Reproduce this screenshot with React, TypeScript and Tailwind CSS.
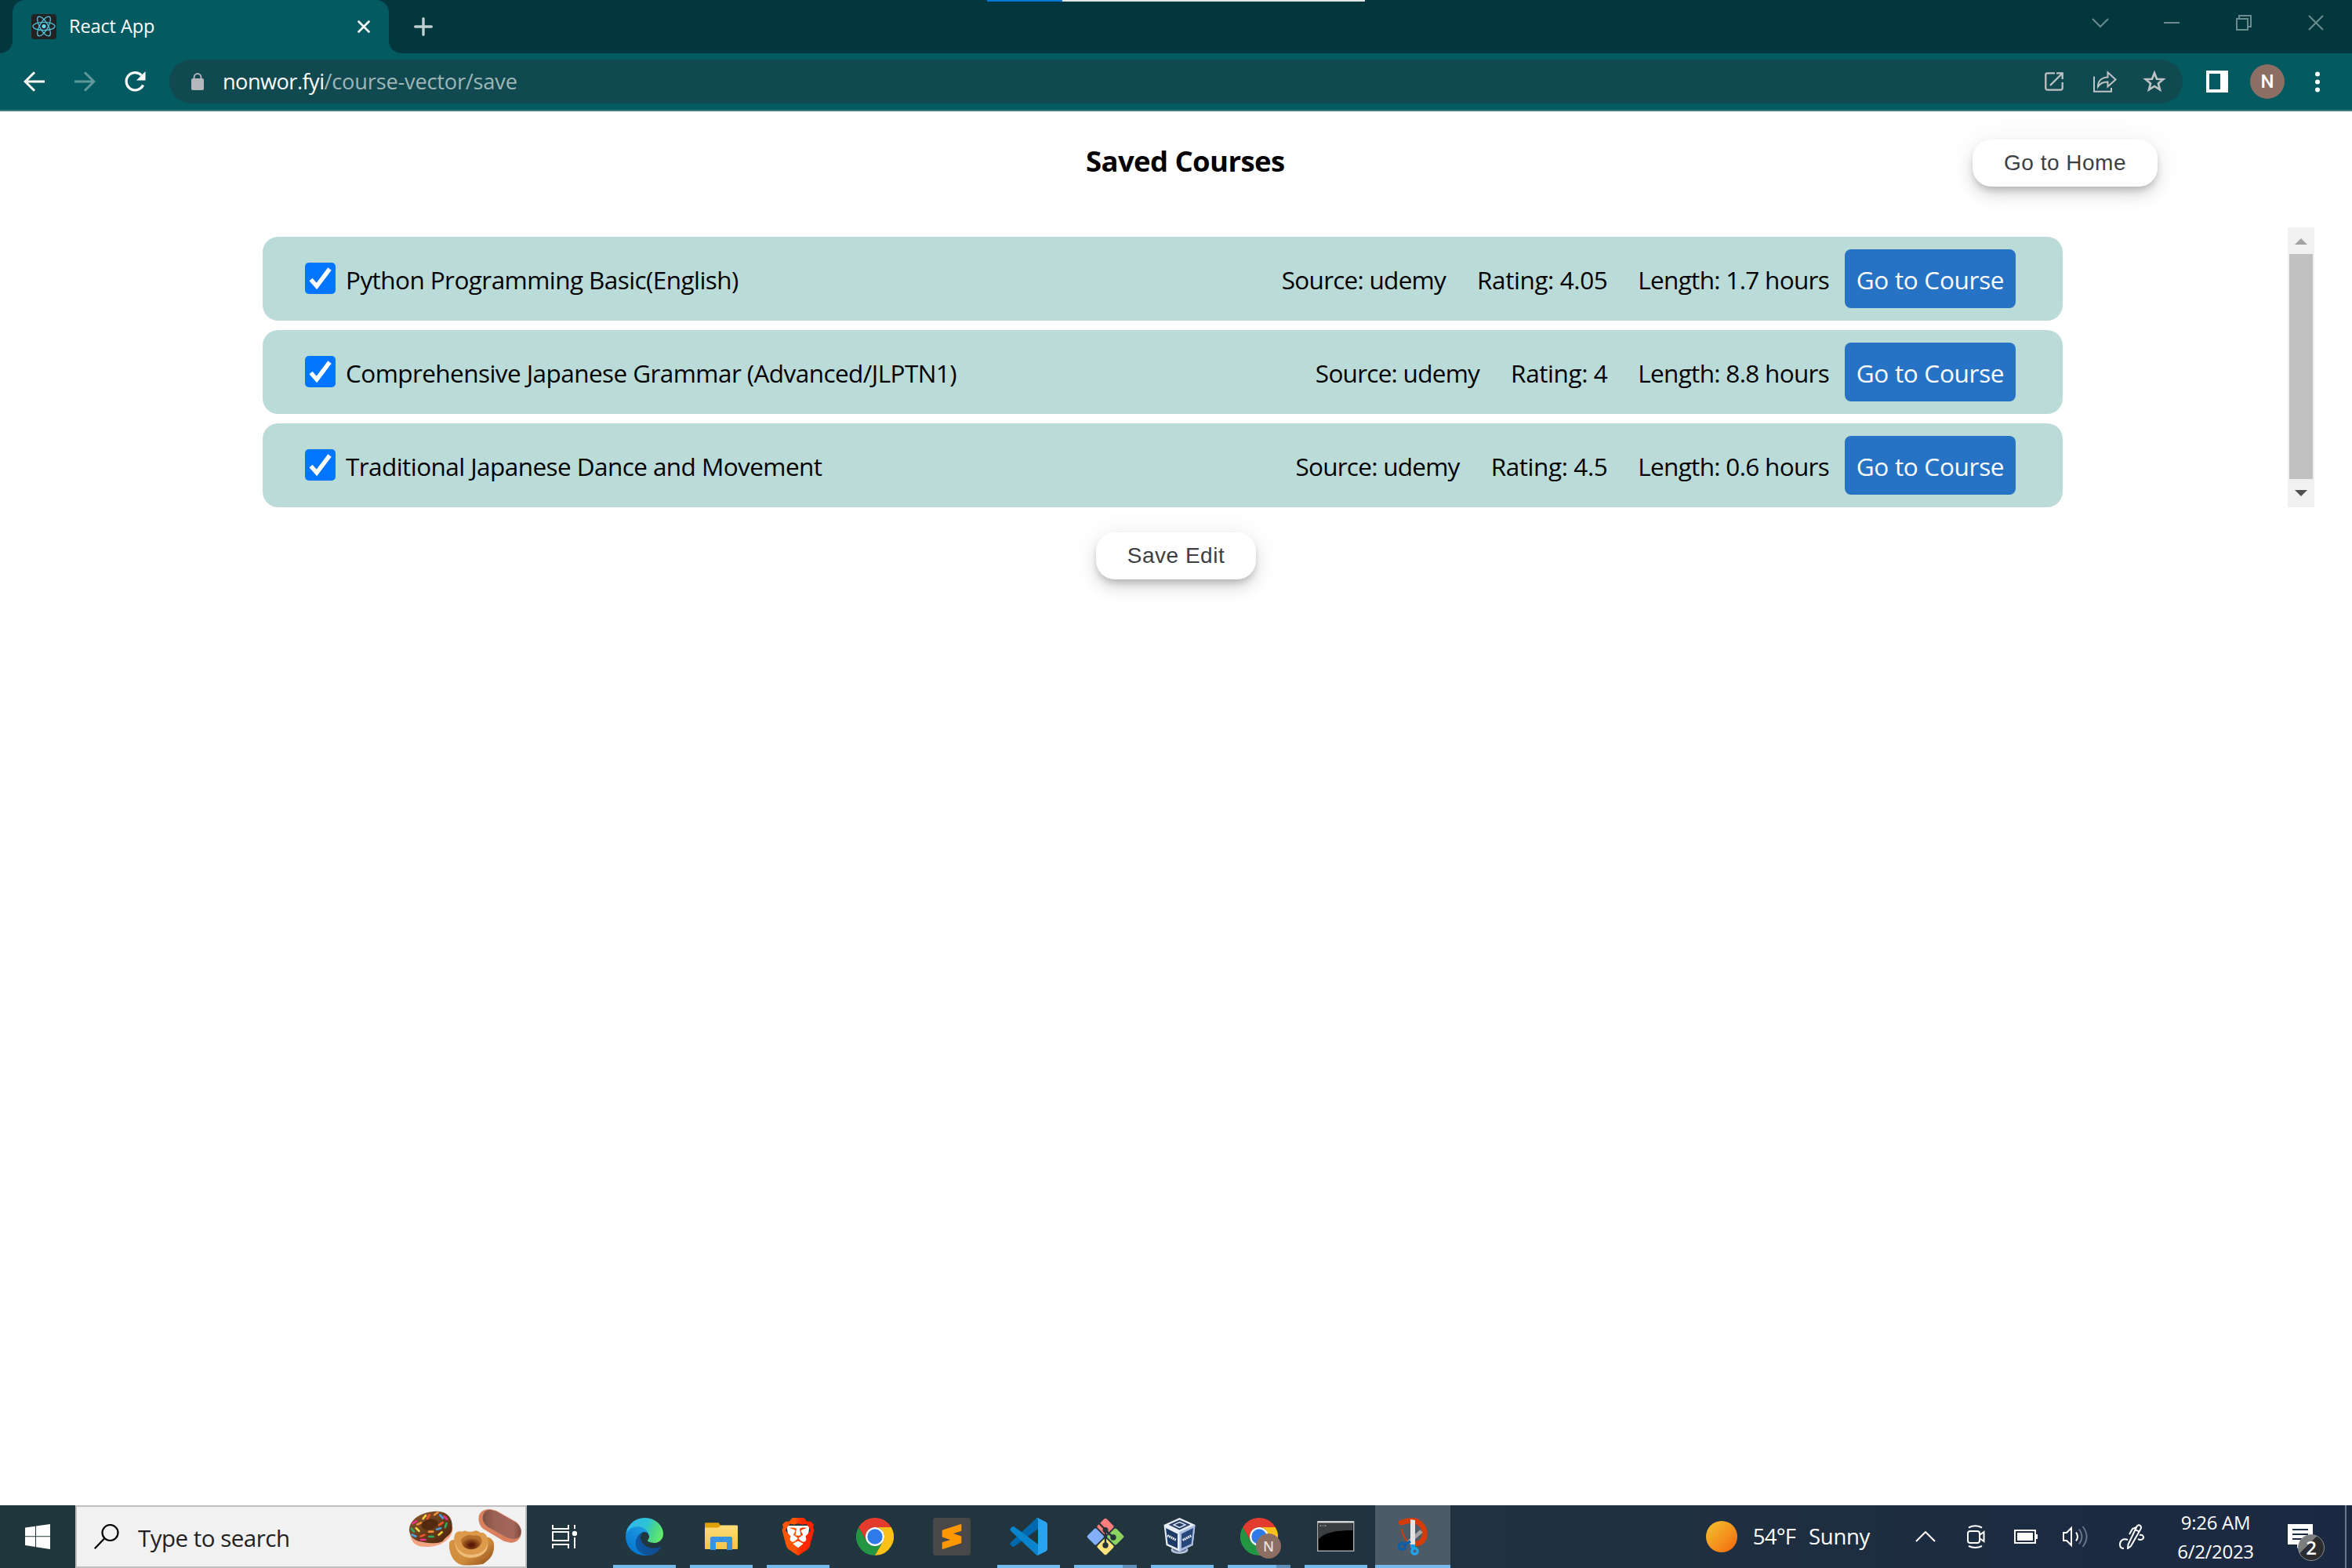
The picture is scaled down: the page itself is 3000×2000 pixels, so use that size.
import { type ReactNode } from 'react';
import { SiBrave, SiSublimetext } from 'react-icons/si';

const ui = "font-['Open_Sans','Noto_Sans',sans-serif] whitespace-nowrap leading-none";

function ReactFavicon() {
  return (
    <svg className="h-8 w-8 shrink-0" viewBox="0 0 32 32" fill="none" stroke="#53c1de" strokeWidth="1.3">
      <rect width="32" height="32" rx="4" fill="#222" stroke="none" />
      <ellipse cx="16" cy="15.5" rx="14" ry="5.2" />
      <ellipse cx="16" cy="15.5" rx="14" ry="5.2" transform="rotate(60 16 15.5)" />
      <ellipse cx="16" cy="15.5" rx="14" ry="5.2" transform="rotate(120 16 15.5)" />
      <circle cx="16" cy="15.5" r="2.5" fill="#61dafb" stroke="none" />
    </svg>
  );
}

function TabStrip() {
  return (
    <div className="relative flex h-[68px] items-start bg-[#02383d]">
      <div className="flex h-[68px] w-4 items-end bg-[#035b61]">
        <div className="h-full w-4 rounded-br-2xl bg-[#02383d]" />
      </div>
      <div className="flex h-[68px] w-[480px] items-center rounded-t-2xl bg-[#035b61] pl-6 pr-6">
        <ReactFavicon />
        <span className={`${ui} ml-4 grow text-[23.5px] tracking-[-0.1px] text-white`}>React App</span>
        <svg className="h-4 w-4" viewBox="0 0 16 16" stroke="#fff" strokeWidth="2.6" strokeLinecap="round">
          <path d="M1.5 1.5l13 13M14.5 1.5l-13 13" />
        </svg>
      </div>
      <div className="flex h-[68px] w-8 bg-[#035b61]">
        <div className="h-full w-8 rounded-bl-2xl bg-[#02383d]" />
      </div>
      <svg className="mt-[22px] h-6 w-6" viewBox="0 0 24 24" stroke="#c0cfd0" strokeWidth="3.4" strokeLinecap="round">
        <path d="M12 1.7v20.6M1.7 12h20.6" />
      </svg>
      <div className="ml-[707px] flex h-0.5 w-[482px]">
        <div className="w-24 bg-[#0078d4]" />
        <div className="grow bg-[#e3e6e6]" />
      </div>
      <svg className="absolute right-9 top-[19px] h-5 w-[296px]" viewBox="0 0 296 20" fill="none" stroke="#6b8b8e" strokeWidth="2">
        <path d="M1 5l10 10L21 5" />
        <path d="M92 10h20" />
        <path d="M185 5h14v14h-14zM188 5V1h15v14h-4" />
        <path d="M277 1l18 18M295 1l-18 18" />
      </svg>
    </div>
  );
}

function Toolbar() {
  return (
    <div className="flex h-[74px] items-center border-b-2 border-[#3c7d81] bg-[#035b61]">
      <svg className="ml-[30px] h-7 w-7" viewBox="0 0 28 28" fill="none" stroke="#fff" strokeWidth="3">
        <path d="M27 14H3M14 2.2L2.2 14 14 25.8" />
      </svg>
      <svg className="ml-9 h-7 w-7" viewBox="0 0 28 28" fill="none" stroke="#5f979b" strokeWidth="3">
        <path d="M1 14h24M14 2.2L25.8 14 14 25.8" />
      </svg>
      <svg className="ml-9 h-7 w-7" viewBox="0 0 28 28" fill="none" stroke="#fff" strokeWidth="3.2">
        <path d="M24.5 18.5A11.2 11.2 0 1 1 22.4 6" />
        <path d="M27.5 1v11.5H16z" fill="#fff" stroke="none" />
      </svg>
      <div className="ml-[30px] flex h-14 w-[2568px] items-center rounded-full bg-[#10494f] pl-7 pr-5">
        <svg className="h-[22px] w-4" viewBox="0 0 16 22">
          <path d="M3.6 8V5.5a4.4 4.4 0 0 1 8.8 0V8" fill="none" stroke="#b4b8bc" strokeWidth="2" />
          <rect y="7" width="16" height="15" rx="2" fill="#b4b8bc" />
        </svg>
        <div className={`${ui} ml-6 grow text-[27.2px] text-[#9fb6b9]`}>
          <span className="tracking-[-0.55px] text-white">nonwor.fyi</span>
          <span className="tracking-[-0.2px]">/course-vector/save</span>
        </div>
        <svg className="h-8 w-8" viewBox="0 0 32 32" fill="none" stroke="#bfc3c4" strokeWidth="2.3">
          <path d="M17 5.3H7.5A2.2 2.2 0 0 0 5.3 7.5v17a2.2 2.2 0 0 0 2.2 2.2h17a2.2 2.2 0 0 0 2.2-2.2V17M19 5.3h7.7V13M26.7 5.3L11 21" />
        </svg>
        <svg className="ml-8 h-8 w-8" viewBox="0 0 32 32" fill="none" stroke="#bfc3c4" strokeWidth="2">
          <path d="M3 9.500v19.300h22V24M8 22.500c0-8 5.500-11.800 12.500-12V4.300l10 9.200-10 9v-6c-6-.2-9.500 1.500-12.500 6z" />
        </svg>
        <svg className="ml-8 h-8 w-8" viewBox="0 0 32 32" fill="none" stroke="#bfc3c4" strokeWidth="2.6">
          <path d="M16 5l3 7.700 8.300.5-6.400 5.200 2.100 8-7-4.400-7 4.400 2.100-8-6.400-5.200 8.300-.5z" />
        </svg>
      </div>
      <svg className="ml-[30px] h-7 w-7" viewBox="0 0 28 28">
        <path fillRule="evenodd" d="M0 0h28v28H0zM4 4v20h14V4z" fill="#fff" />
      </svg>
      <div className="ml-7 flex h-11 w-11 items-center justify-center rounded-full bg-[#8d6e63] font-[Roboto,sans-serif] text-[24px] leading-none font-medium text-white">
        N
      </div>
      <svg className="ml-[39px] h-[27px] w-1.5" viewBox="0 0 6 27" fill="#fff">
        <circle cx="3" cy="3.5" r="3" />
        <circle cx="3" cy="13.5" r="3" />
        <circle cx="3" cy="23.5" r="3" />
      </svg>
    </div>
  );
}

const pill =
  "font-['Liberation_Sans',Arial,sans-serif] flex h-[60px] items-center justify-center rounded-3xl bg-white text-[28px] leading-none tracking-[0.5px] text-[#3c4043] whitespace-nowrap shadow-[0_6px_10px_-2px_rgba(0,0,0,0.2),0_12px_20px_0_rgba(0,0,0,0.1),0_2px_36px_0_rgba(0,0,0,0.07)]";

const courses = [
  { title: 'Python Programming Basic(English)', rating: '4.05', length: '1.7' },
  { title: 'Comprehensive Japanese Grammar (Advanced/JLPTN1)', rating: '4', length: '8.8' },
  { title: 'Traditional Japanese Dance and Movement', rating: '4.5', length: '0.6' },
];

function CourseRow({ course }: { course: (typeof courses)[number] }) {
  return (
    <li className={`${ui} flex h-[107px] w-[2296px] items-center rounded-[20px] bg-[#bbdbd9] pl-[54px] pr-[60px] text-[31.5px] text-black`}>
      <svg className="mb-0.5 h-10 w-[39px] shrink-0" viewBox="0 0 39 40">
        <rect width="39" height="40" rx="5" fill="#0075ff" />
        <path d="M7.5 21.5l7.5 8.500L31.500 8" fill="none" stroke="#fff" strokeWidth="5.5" />
      </svg>
      <span className="ml-[13px] grow pt-0.5 tracking-[-0.57px]">{course.title}</span>
      <span className="mr-10 pt-0.5 tracking-[-0.74px]">Source: udemy</span>
      <span className="mr-[39px] pt-0.5 tracking-[-0.42px]">Rating: {course.rating}</span>
      <span className="mr-5 pt-0.5 tracking-[-0.7px]">Length: {course.length} hours</span>
      <a className="flex h-[75px] w-[218px] items-center justify-center rounded-lg bg-[#2673c5] pt-0.5 text-white">
        <span className="tracking-[-0.3px]">Go to Course</span>
      </a>
    </li>
  );
}

function Page() {
  return (
    <main className="flex grow flex-col bg-white">
      <header className="flex h-[148px] items-start pl-[1385px] pr-[248px] pt-9">
        <h1 className={`${ui} grow pt-[9px] text-[36.5px] font-bold tracking-[-0.6px] text-black`}>Saved Courses</h1>
        <button className={`${pill} w-[236px]`}>Go to Home</button>
      </header>
      <div className="flex h-[357px] justify-between pl-[335px] pr-12">
        <ul className="flex flex-col gap-3 pt-3">
          {courses.map((course) => <CourseRow key={course.title} course={course} />)}
        </ul>
        <div className="flex h-[357px] w-[34px] flex-col items-center justify-between bg-[#f1f1f1] py-3.5">
          <svg className="h-2 w-4" viewBox="0 0 16 8"><path d="M8 0l8 8H0z" fill="#a3a3a3" /></svg>
          <div className="mb-[14px] mt-3 w-[30px] grow bg-[#c1c1c1]" />
          <svg className="h-2 w-4" viewBox="0 0 16 8"><path d="M8 8L0 0h16z" fill="#505050" /></svg>
        </div>
      </div>
      <button className={`${pill} ml-[1398px] mt-8 w-[204px]`}>Save Edit</button>
    </main>
  );
}

const sprinkles: [number, number, number, string][] = [
  [92, 60, -50, '#f5d23c'], [107, 59, -60, '#f0542d'], [137, 47, -35, '#f08a3c'], [157, 58, 50, '#48a0e0'],
  [173, 63, 45, '#f02f8c'], [54, 80, -30, '#f02f8c'], [72, 85, -25, '#f08a3c'], [47, 110, 50, '#2fa866'],
  [66, 108, 45, '#f5e04c'], [52, 131, 25, '#48a0e0'], [85, 131, -20, '#f0542d'], [117, 116, 0, '#f08a3c'],
  [147, 105, -15, '#48a0e0'], [155, 86, -35, '#f0542d'], [174, 92, -70, '#2fa866'], [153, 123, -40, '#f5d23c'],
  [118, 135, 0, '#2fa866'], [87, 147, 0, '#f02f8c'],
];

function Donuts() {
  return (
    <svg className="h-[76px] w-[152px]" viewBox="22 21 456 228">
      <defs>
        <linearGradient id="glaze" x1="0" y1="0" x2="1" y2="1"><stop stopColor="#8a5a2c" /><stop offset="1" stopColor="#4a220c" /></linearGradient>
        <linearGradient id="dough" x1="0" y1="0" x2="1" y2="1"><stop stopColor="#d9974a" /><stop offset=".6" stopColor="#cf8a3a" /><stop offset="1" stopColor="#8a4a1a" /></linearGradient>
        <linearGradient id="eclair" x1="0" y1="0" x2="1" y2="0"><stop stopColor="#7d5040" /><stop offset=".3" stopColor="#9c6256" /><stop offset=".8" stopColor="#a3665a" /><stop offset="1" stopColor="#7d4a3e" /></linearGradient>
        <radialGradient id="hole" cy=".7"><stop offset=".2" stopColor="#5a1a06" /><stop offset="1" stopColor="#b5702c" /></radialGradient>
      </defs>
      <path d="M36 108C36 160 60 174 100 174c60 0 104-36 100-76z" fill="#f2a382" />
      <path d="M34 112C32 68 84 38 140 38c40 0 62 26 58 66-2 24-22 28-34 46-10 12-50 12-76 6-20-2-50-10-54-44z" fill="url(#glaze)" />
      <ellipse cx="112" cy="88" rx="33" ry="20" transform="rotate(-16 112 88)" fill="#522a10" />
      {sprinkles.map(([x, y, a, c]) => (
        <rect key={`${x}-${y}`} x={x - 12} y={y - 4} width="24" height="8" rx="4" fill={c} transform={`rotate(${a} ${x} ${y})`} />
      ))}
      <path d="M300 62c0-20 20-34 44-32l24 6 74 42c16 12 22 30 20 46-2 20-18 36-42 34l-24-6-78-46c-14-12-20-28-18-44z" fill="#d9805f" />
      <path d="M315 64c0-20 12-32 30-32l22 6 70 40c20 12 28 28 24 46-4 16-18 22-34 20l-20-6-72-40c-14-10-20-22-20-34z" fill="url(#eclair)" />
      <path d="M187 160c0-8 8-14 19-12 0-14 2-28 14-32 14 0 20 0 28-4 12 6 24 6 40 0 10 2 16 6 20 10 10 2 14 8 12 16 22-6 38 12 38 26 4 50-30 66-42 76-20 2-60 8-84 2-30-8-48-46-45-82z" fill="url(#dough)" />
      <path d="M208 150c-4-14 4-32 14-34l94 4c14 6 20 20 20 38-2 36-32 56-66 56-36 0-58-26-62-64z" fill="#dc9a4a" />
      <path d="M208 150c6 36 30 54 62 54 32 0 62-14 64-50 6 40-26 62-64 62-36 0-62-26-62-66z" fill="#eebd78" />
      <path d="M232 150c4-14 18-18 30-22 24 6 50-6 50 26-4 18-22 30-40 30-22 0-38-12-40-34z" fill="url(#hole)" />
    </svg>
  );
}

function Chrome() {
  return (
    <svg className="h-12 w-12" viewBox="0 0 48 48">
      <path d="M3.2 12A24 24 0 0 0 24 48l10.4-18a12 12 0 0 1-20.8 0z" fill="#239644" />
      <path d="M44.8 12H24a12 12 0 0 1 10.4 18L24 48a24 24 0 0 0 20.8-36z" fill="#fbc116" />
      <path d="M24 12h20.8A24 24 0 0 0 3.2 12l10.400 18A12 12 0 0 1 24 12z" fill="#e33b2e" />
      <circle cx="24" cy="24" r="12" fill="#fff" />
      <circle cx="24" cy="24" r="9.7" fill="#2f7bea" />
    </svg>
  );
}

function Edge() {
  return (
    <svg className="h-12 w-12" viewBox="0 0 256 256">
      <defs>
        <linearGradient id="e1" x1="0" x2="1" y1=".5" y2=".5"><stop stopColor="#0c59a4" /><stop offset="1" stopColor="#114a8b" /></linearGradient>
        <linearGradient id="e2" x1=".6" x2=".2" y1="0" y2="1"><stop stopColor="#1b9de2" /><stop offset=".4" stopColor="#1389d8" /><stop offset="1" stopColor="#0573cf" /></linearGradient>
        <linearGradient id="e3" x1="0" x2="1" y1=".3" y2=".6"><stop stopColor="#35b6f2" /><stop offset=".5" stopColor="#2cc3d4" /><stop offset=".75" stopColor="#4bd689" /><stop offset="1" stopColor="#66eb6e" /></linearGradient>
      </defs>
      <path fill="url(#e1)" d="M235.700 195.500a93.700 93.700 0 0 1-10.600 4.700 101.900 101.900 0 0 1-35.900 6.400c-47.300 0-88.500-32.500-88.500-74.300a31.500 31.500 0 0 1 16.400-27.300c-42.800 1.800-53.800 46.400-53.800 72.500 0 74 68.100 81.400 82.800 81.400 7.900 0 19.800-2.300 27-4.600l1.300-.4a128.300 128.300 0 0 0 66.600-52.800 4 4 0 0 0-5.300-5.600Z" />
      <path fill="url(#e2)" d="M105.700 241.400a79.200 79.200 0 0 1-22.700-21.300 80.700 80.700 0 0 1 29.500-120c3.200-1.500 8.500-4.100 15.600-4a32.400 32.400 0 0 1 25.700 13 31.900 31.900 0 0 1 6.300 18.700c0-.2 24.500-79.600-80-79.600-43.900 0-80 41.600-80 78.200a130.200 130.200 0 0 0 12.100 56 128 128 0 0 0 156.400 67 75.500 75.500 0 0 1-62.800-8Z" />
      <path fill="url(#e3)" d="M152.300 148.900c-.9 1-3.400 2.500-3.400 5.600 0 2.600 1.700 5.200 4.800 7.300 14.300 10 41.400 8.600 41.500 8.600a59.600 59.600 0 0 0 30.300-8.300 61.400 61.400 0 0 0 30.400-52.900c.3-22.400-8-37.300-11.300-43.900C223.500 23.900 177.700 0 128 0A128 128 0 0 0 0 126.200c.5-36.500 36.800-66 80-66 3.500 0 23.500.3 42 10a72.600 72.600 0 0 1 30.900 29.300c6.100 10.600 7.200 24.100 7.200 29.500s-2.700 13.300-7.800 19.900Z" />
    </svg>
  );
}

function Explorer() {
  return (
    <svg className="h-12 w-12" viewBox="0 0 48 48">
      <defs>
        <linearGradient id="f1" x1="0" y1="0" x2="0" y2="1"><stop stopColor="#ffdd78" /><stop offset="1" stopColor="#f6c445" /></linearGradient>
      </defs>
      <path d="M3 14V7.500A1.200 1.200 0 0 1 4.200 6.300h16.300l2.500 3.200v4z" fill="#dfa008" />
      <path d="M3 12.500h17l3.500-3H44a1 1 0 0 1 1 1V39a1 1 0 0 1-1 1H4a1 1 0 0 1-1-1z" fill="url(#f1)" />
      <path d="M10 41V26.500A2.500 2.500 0 0 1 12.500 24h23a2.500 2.500 0 0 1 2.500 2.500V41h-7V31H17v10z" fill="#3a93de" />
    </svg>
  );
}

function Brave() {
  return (
    <svg className="h-12 w-12" viewBox="0 0 48 48">
      <defs>
        <linearGradient id="b1" x1="0" x2="1"><stop offset=".4" stopColor="#ff5500" /><stop offset=".6" stopColor="#ff2a00" /><stop offset="1" stopColor="#ff2000" /></linearGradient>
      </defs>
      <path d="M9.500 10h29l-3 22-11.500 8-11.500-8z" fill="#fff" />
      <SiBrave size={48} fill="url(#b1)" />
    </svg>
  );
}

function Sublime() {
  return (
    <div className="flex h-12 w-12 items-center justify-center rounded-[3px] bg-[#484848]">
      <SiSublimetext className="h-8 w-8 text-[#ff9800]" />
    </div>
  );
}

function VsCode() {
  return (
    <svg className="h-12 w-12" viewBox="0 0 48 48">
      <path d="M1.5 31L33.500 1H37v12.500L6 36.600q-1.500 1-3-.2L1.200 34.800q-1.700-2 .3-3.800z" fill="#0068ac" />
      <path d="M1.5 17l32 30H37V34.500L6 11.400q-1.500-1-3 .2L1.200 13.200q-1.700 2 .3 3.800z" fill="#0a84cc" />
      <path d="M36 .3l10 4.900q2 1 2 3.300v31q0 2.300-2 3.300l-10 4.900q-1.500.3-2.500-.7 2.500.5 2.500-2V3q0-2.500-2.500-2 1-1 2.500-.7z" fill="#27a3f0" />
    </svg>
  );
}

function Git() {
  return (
    <svg className="h-12 w-12" viewBox="0 0 48 48">
      <g transform="rotate(45 24 24)">
        <rect x="7" y="7" width="16" height="16" rx="2" fill="#ff7c7c" />
        <rect x="25" y="7" width="16" height="16" rx="2" fill="#8bd35f" />
        <rect x="7" y="25" width="16" height="16" rx="2" fill="#82b0fb" />
        <rect x="25" y="25" width="16" height="16" rx="2" fill="#ffe27c" />
      </g>
      <g stroke="#22333c" strokeWidth="2.4" fill="#22333c">
        <path d="M16 7l8 8.500M24 15v19M24 16l9 8" />
        <circle cx="24" cy="15.5" r="2.300" /><circle cx="34" cy="25" r="2.500" /><circle cx="24" cy="35" r="2.500" />
      </g>
    </svg>
  );
}

function VirtualBox() {
  return (
    <svg className="h-12 w-12" viewBox="3.5 0 48 48">
      <ellipse cx="24" cy="41" rx="11" ry="5" fill="#b8c4dc" />
      <ellipse cx="24" cy="39.5" rx="9" ry="4" fill="#5d7099" />
      <path d="M24 0l20 9-3 26-17 8L7 35 4 9z" fill="#e8edf6" />
      <path d="M24 2.500L38 8.800 24 15.500 10 8.800z" fill="#243e66" />
      <path d="M24 5.500l7.500 3.400L24 12.500l-7.500-3.600z" fill="none" stroke="#dbe3f0" strokeWidth="1.5" />
      <path d="M6.500 13l15 7.500v18.500L9 33.200z" fill="#1e3a66" />
      <path d="M44 9l-3 26-17 8V18z" fill="#a9bde0" />
      <path d="M41.500 13l-15 7.500v18.500L39 33.200z" fill="#27467a" />
      <path d="M8.500 22.500l11.500 6M28 28.500l11.500-6" stroke="#f0f4fa" strokeWidth="3" strokeDasharray="1.8 .8" />
    </svg>
  );
}

function Terminal() {
  return (
    <svg className="h-12 w-12" viewBox="0 0 48 48">
      <rect x=".7" y="4.7" width="46" height="37.600" fill="#000" stroke="#a9adb2" strokeWidth="1.4" />
      <rect x="1" y="4.5" width="45.500" height="2" fill="#e4e6e8" />
      <path d="M2 7h43.500v9C26 16 10 18 2 27z" fill="#3c3f41" />
      <path d="M3.500 10h2M7 10h1M9.500 10h2" stroke="#9a9a9a" strokeWidth="1.5" />
    </svg>
  );
}

function Snip() {
  return (
    <svg className="h-12 w-12" viewBox="0 0 48 48" fill="none">
      <path d="M9.500 6C17 3.500 27 2 33 7c9 7 9 26-6 26" stroke="#d43c0a" strokeWidth="7" strokeLinecap="round" />
      <path d="M10 14c0 6 3 11 7 16" stroke="#c8400f" strokeWidth="2" />
      <path d="M35 17L18 32" stroke="#a5a5a5" strokeWidth="5" />
      <path d="M21 2l6 1v31h-6z" fill="#e4e4e4" />
      <path d="M21 34h6v5h-6z" fill="#1f9be6" />
      <circle cx="10.5" cy="36.5" r="4" stroke="#0b5ea8" strokeWidth="3.5" />
      <circle cx="26.5" cy="42.5" r="3.7" stroke="#22a3ec" strokeWidth="3.2" />
      <path d="M13.500 34l7.500-4" stroke="#0b5ea8" strokeWidth="3.500" />
    </svg>
  );
}

function Task({ children, state = 'open' }: { children: ReactNode; state?: 'open' | 'closed' | 'stacked' | 'active' }) {
  return (
    <div className={`flex h-20 flex-col items-center pt-4 ${state === 'active' ? 'mx-px w-24 bg-[#4d5b66]' : 'w-[98px]'}`}>
      {children}
      <div className={`mt-3 flex h-1 ${state === 'active' ? 'w-full' : 'w-20'} ${state === 'closed' ? '' : 'bg-[#76b9ed]'}`}>
        {state === 'stacked' && <div className="ml-auto h-1 w-[18px] bg-[#5d8fb9]" />}
      </div>
    </div>
  );
}

function Tray() {
  return (
    <div className="ml-auto flex h-20 items-center text-white">
      <div className="h-10 w-10 rounded-full bg-gradient-to-br from-[#f3c32f] to-[#f0640c]" />
      <span className="ml-5 text-[27.5px] tracking-[-0.8px]">54°F</span>
      <span className="ml-[17px] text-[27.5px] tracking-[-0.3px]">Sunny</span>
      <svg className="ml-[58px] h-[14px] w-[26px]" viewBox="0 0 26 14" fill="none" stroke="#fff" strokeWidth="2">
        <path d="M1 13L13 1l12 12" />
      </svg>
      <svg className="ml-10 h-8 w-6" viewBox="0 0 24 32" fill="none" stroke="#fff" strokeWidth="2">
        <path d="M2 4.500q8.500-4.500 17 0M2 28q8.500 4 17 0M16 14l5.500-4v12L16 18" />
        <rect x="1" y="9" width="15" height="15" rx="3" />
      </svg>
      <svg className="ml-9 h-[18px] w-[30px]" viewBox="0 0 30 18" fill="none" stroke="#fff" strokeWidth="2">
        <path d="M1 1h26v16H1z" />
        <path d="M4 4h20v10H4zM28 6h2v6h-2z" fill="#fff" stroke="none" />
      </svg>
      <svg className="ml-8 h-7 w-8" viewBox="0 0 32 28" fill="none" stroke="#fff" strokeWidth="2">
        <path d="M1 9h4l6-6v22l-6-6H1z" />
        <path d="M17 8.500q4 5.500 0 11" />
        <path d="M21 4.500q7 9.500 0 19M25.500 1q10 13 0 26" stroke="#697386" />
      </svg>
      <svg className="ml-10 h-8 w-8" viewBox="0 0 32 32" fill="none" stroke="#fff" strokeWidth="2">
        <path d="M22 4q2-4 5-2 2 2 0 5L15 28l-4 3 .5-5zM21 7l5 3M22 4l-5 2-4 7M11 20c-6-2-10 1-10 6 0 3 2 5 5 5M26 14c5-1 6 3 4 5q-3 2-6 0" />
      </svg>
      <div className="ml-8 flex h-20 w-[118px] flex-col items-center justify-center gap-[13px] pt-px text-[24px] tracking-[-0.3px]">
        <span>9:26 AM</span>
        <span>6/2/2023</span>
      </div>
      <div className="relative ml-[33px] h-8 w-[73px]">
        <svg className="h-8 w-8" viewBox="0 0 32 32">
          <path d="M0 0h32v26H17l-5 5v-5H0z" fill="#fff" />
          <path d="M6 7h20M6 13h20M6 19h20" stroke="#1c2b43" strokeWidth="2" />
        </svg>
        <div className="absolute left-[13px] top-[13px] flex h-[34px] w-[34px] items-center justify-center rounded-full border border-[#8a8d91] bg-[linear-gradient(135deg,#7c7d7e_38%,#2b2d31_38%)] text-[24px] font-semibold">
          2
        </div>
      </div>
      <div className="h-20 w-[9px] border-l-2 border-[#6d7788]" />
    </div>
  );
}

function Taskbar() {
  return (
    <footer className={`${ui} flex h-20 bg-gradient-to-r from-[#20373e] via-[#22353f] to-[#1b2842]`}>
      <div className="flex h-20 w-24 items-center justify-center">
        <svg className="h-8 w-8" viewBox="0 0 32 32" fill="#fff">
          <path d="M0 4.500l13-1.800v12.600H0zM14 2.500L32 0v15.300H14zM0 16.300h13v12.600L0 27zM14 16.300h18V32l-18-2.800z" />
        </svg>
      </div>
      <div className="flex h-20 w-[576px] items-center border-2 border-[#bfbfbf] bg-[#f1f1f1] pl-[22px]">
        <svg className="h-8 w-8" viewBox="0 0 32 32" fill="none" stroke="#000" strokeWidth="2.2">
          <circle cx="20.5" cy="11" r="10" />
          <path d="M13.500 18L.8 31.200" />
        </svg>
        <span className="ml-6 grow pt-[3px] text-[29.5px] tracking-[-0.5px] text-[#222]">Type to search</span>
        <Donuts />
      </div>
      <div className="flex h-20 w-[95px] items-center justify-center">
        <svg className="h-[30px] w-8" viewBox="0 0 32 30" fill="none" stroke="#fff" strokeWidth="2">
          <path d="M1 0v5h20V0M1 9h20v11H1zM1 30v-5h20v5M29 0v5M29 16v14" />
          <circle cx="29" cy="11" r="3.2" fill="#fff" stroke="none" />
        </svg>
      </div>
      <div className="flex pl-1.5">
        <Task><Edge /></Task>
        <Task><Explorer /></Task>
        <Task><Brave /></Task>
        <Task state="closed"><Chrome /></Task>
        <Task state="closed"><Sublime /></Task>
        <Task><VsCode /></Task>
        <Task state="stacked"><Git /></Task>
        <Task><VirtualBox /></Task>
        <Task state="stacked">
          <div className="relative">
            <Chrome />
            <div className="absolute -bottom-1 left-5 flex h-8 w-8 items-center justify-center rounded-full bg-[#8d6e63] text-[18px] font-semibold text-[#e5dcd8]">N</div>
          </div>
        </Task>
        <Task><Terminal /></Task>
        <Task state="active"><Snip /></Task>
      </div>
      <Tray />
    </footer>
  );
}

export default function App() {
  return (
    <div className="flex h-[2000px] w-[3000px] flex-col overflow-hidden bg-white">
      <TabStrip />
      <Toolbar />
      <Page />
      <Taskbar />
    </div>
  );
}
